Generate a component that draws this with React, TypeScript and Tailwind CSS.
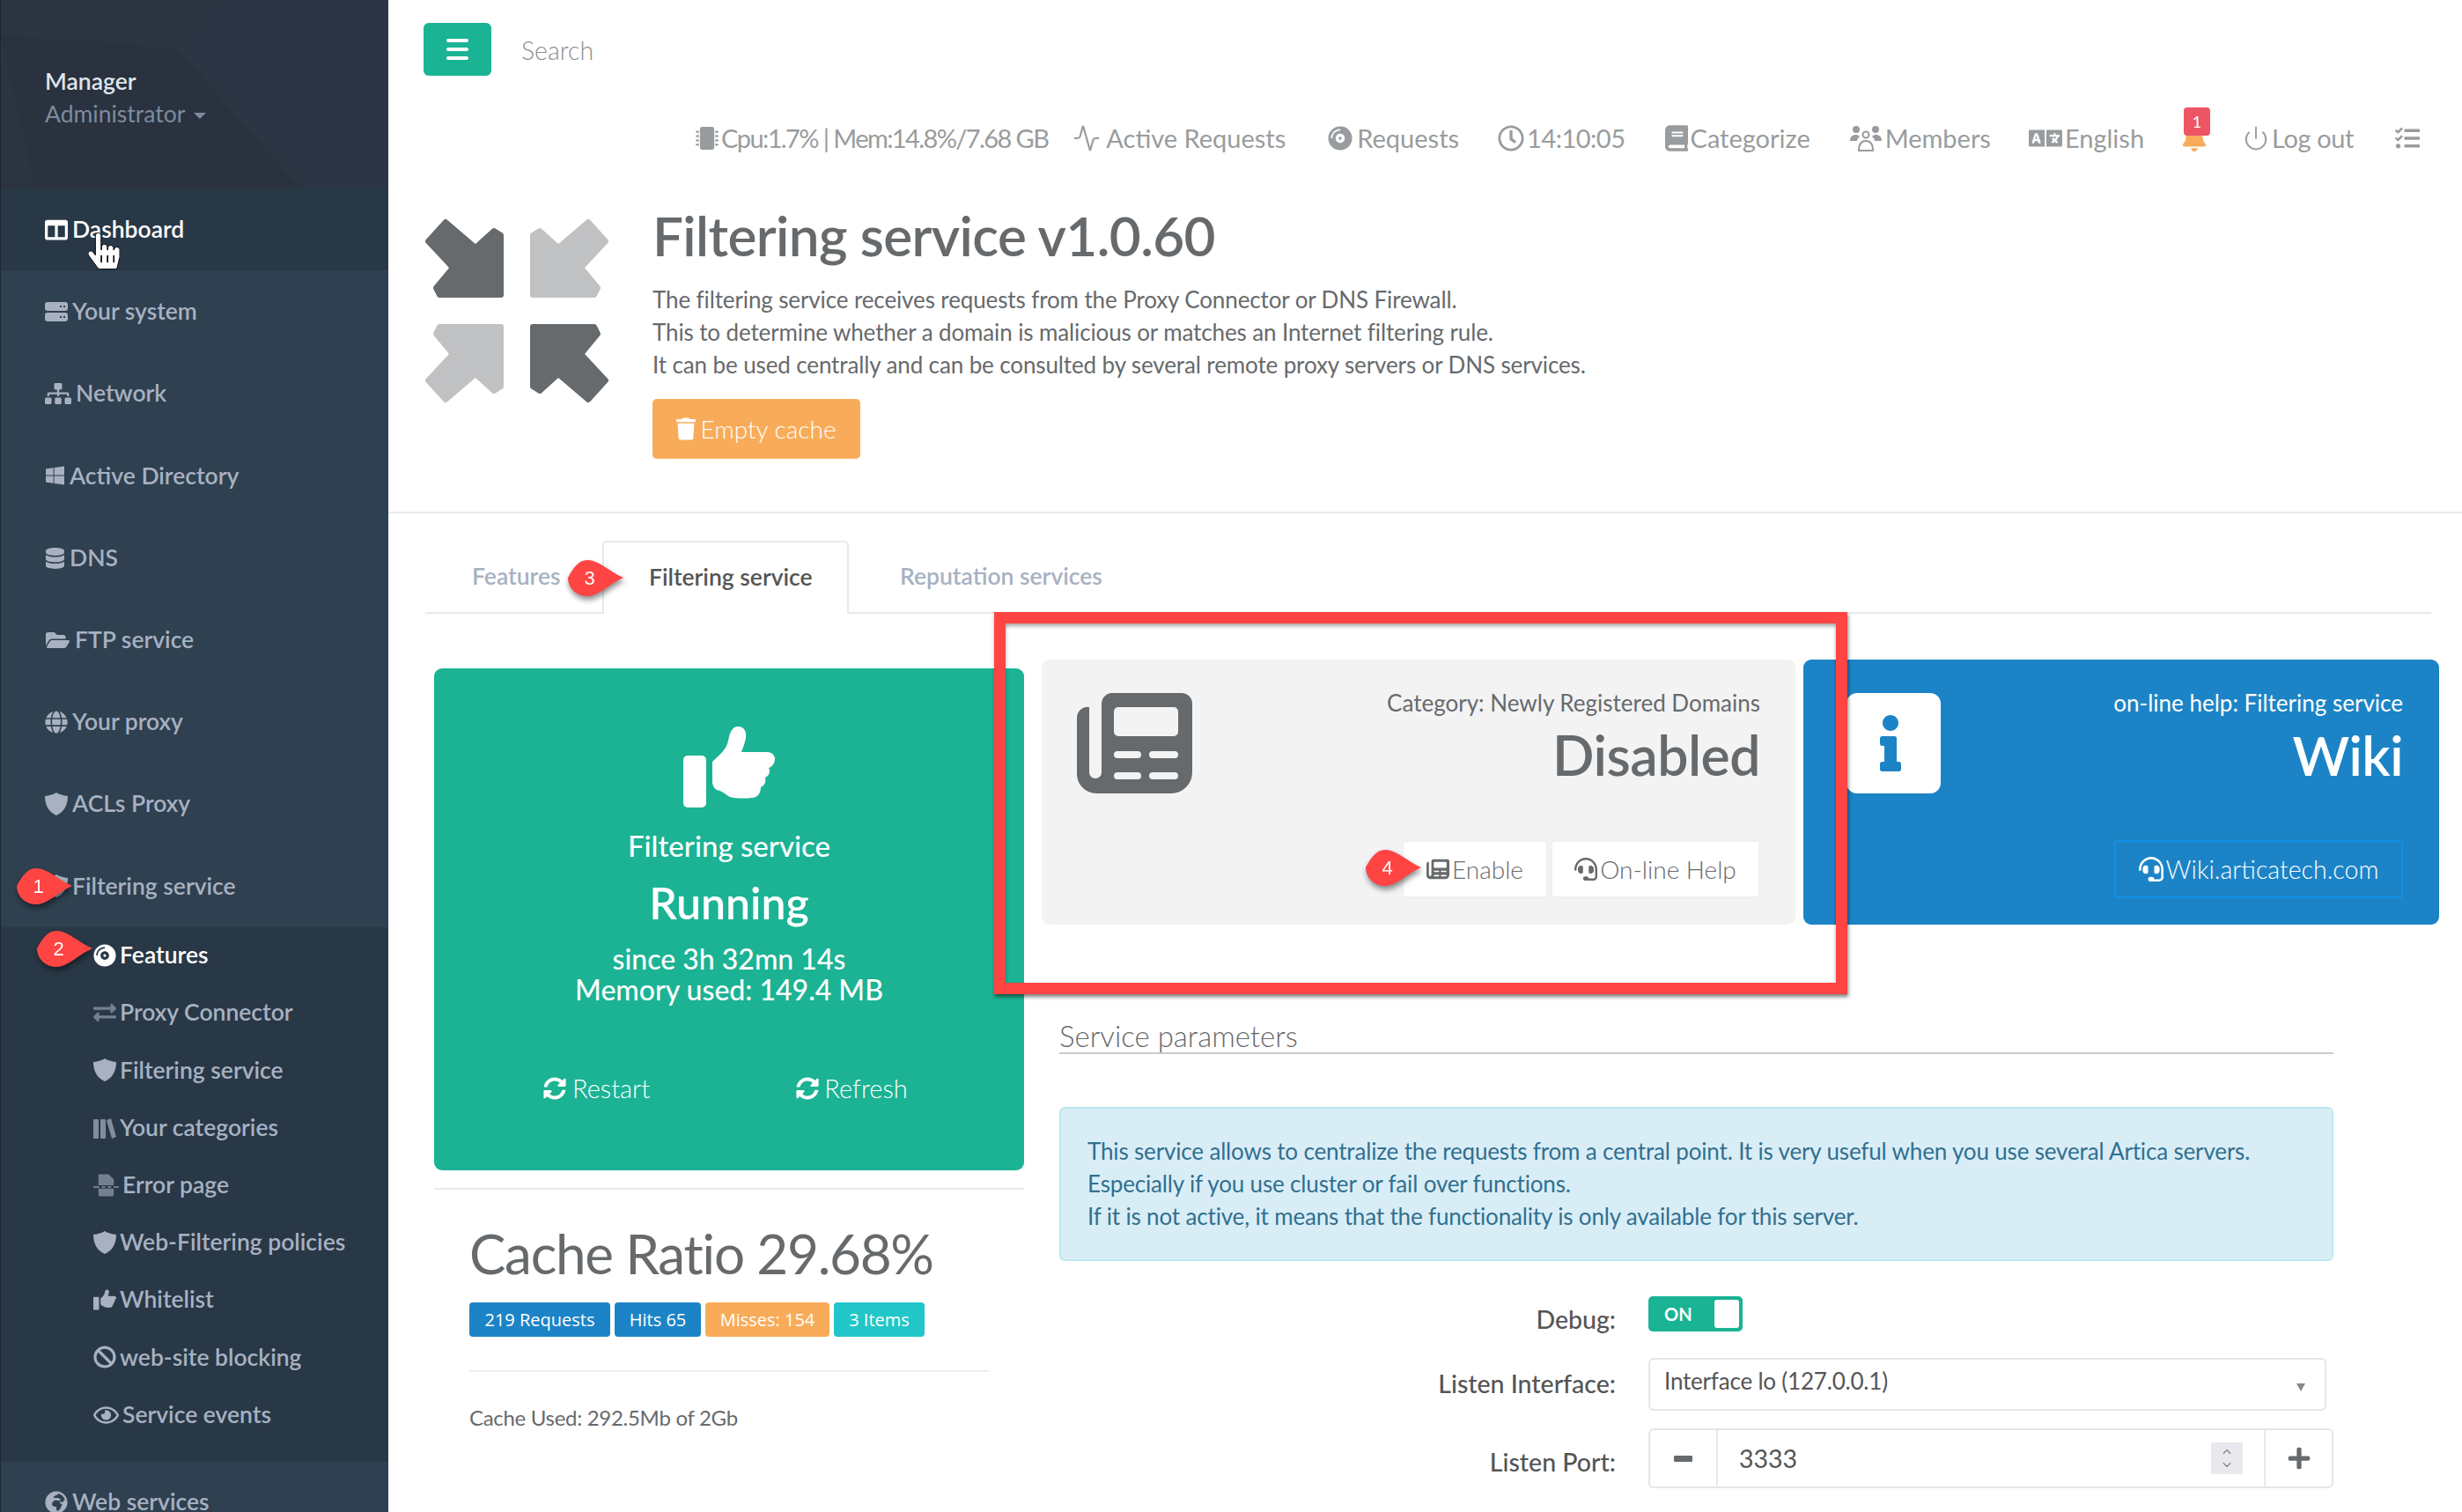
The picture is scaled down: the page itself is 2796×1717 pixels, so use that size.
import type { ReactNode } from 'react'
import {
  FaBan, FaBell, FaBook, FaColumns, FaCompactDisc, FaDatabase, FaExchangeAlt, FaFolderOpen, FaGlobe,
  FaGlobeAfrica, FaHandPointer, FaHeadset, FaInfo, FaLanguage, FaMicrochip, FaPlus,
  FaRegClock, FaRegEye, FaSitemap, FaSyncAlt, FaTasks, FaTrash, FaWindows,
} from 'react-icons/fa'
import { Activity, ChevronDown, ChevronUp, Power } from 'lucide-react'

type IconProps = { className?: string }

function BooksIcon({ className }: IconProps) {
  return (
    <svg viewBox="0 0 26 24" className={className} fill="currentColor">
      <rect x="0" y="2" width="6" height="22" rx="1" />
      <rect x="8" y="2" width="6" height="22" rx="1" />
      <path d="M15 3l5-2 6 21-5 2z" />
    </svg>
  )
}

function PageBreakIcon({ className }: IconProps) {
  return (
    <svg viewBox="0 0 30 26" className={className} fill="currentColor">
      <path d="M6 0h12l6 6v7H6zM6 17h18v7a2 2 0 0 1-2 2H8a2 2 0 0 1-2-2z" />
      <rect x="0" y="14" width="7" height="2" />
      <rect x="10" y="14" width="4" height="2" />
      <rect x="17" y="14" width="4" height="2" />
      <rect x="24" y="14" width="6" height="2" />
    </svg>
  )
}

function MembersIcon({ className }: IconProps) {
  return (
    <svg viewBox="0 0 36 30" className={className} fill="currentColor">
      <circle cx="7" cy="5" r="4" />
      <circle cx="29" cy="5" r="4" />
      <circle cx="18" cy="11" r="3.5" fill="none" stroke="currentColor" strokeWidth="2" />
      <path d="M0 18c0-5 3-7 7-7 2 0 3 1 4 2-2 2-3 3-3 5zM36 18c0-5-3-7-7-7-2 0-3 1-4 2 2 2 3 3 3 5z" />
      <path d="M10 29c0-7 3-11 8-11s8 4 8 11z" fill="none" stroke="currentColor" strokeWidth="2" />
    </svg>
  )
}

function ServerIcon({ className }: IconProps) {
  return (
    <svg viewBox="0 0 26 22" className={className} fill="currentColor" fillRule="evenodd">
      <path d="M3 0h20a3 3 0 0 1 3 3v4a3 3 0 0 1-3 3H3a3 3 0 0 1-3-3V3a3 3 0 0 1 3-3zM17 4v2h2V4zM21 4v2h2V4z" />
      <path d="M3 12h20a3 3 0 0 1 3 3v4a3 3 0 0 1-3 3H3a3 3 0 0 1-3-3v-4a3 3 0 0 1 3-3zM17 16v2h2v-2zM21 16v2h2v-2z" />
    </svg>
  )
}

function ShieldIcon({ className }: IconProps) {
  return (
    <svg viewBox="0 0 26 26" className={className} fill="currentColor">
      <path d="M13 0c3 2 8 3.500 13 4 0 10-4 18-13 22C4 22 0 14 0 4c5-.5 10-2 13-4z" />
    </svg>
  )
}

function ThumbIcon({ className }: IconProps) {
  return (
    <svg viewBox="0 0 104 92" className={className} fill="currentColor">
      <rect x="0" y="33" width="26" height="59" rx="5" />
      <path d="M33 40C40 33 49 27 51 16 53 6 56 0 62 0c8 0 10 7 9 13-1 6-4 13-5 16h29c6 0 9 4 9 8s-3 9-7 10c2 3 1 9-4 11 1 4 0 9-5 11 0 7-4 12-10 12-8 1-22 1-27-2-4-3-8-6-13-7-2-1-5-5-5-9z" />
    </svg>
  )
}

function NewspaperIcon({ className }: IconProps) {
  return (
    <svg viewBox="0 0 131 114" className={className} fill="currentColor" fillRule="evenodd">
      <path d="M38 0h81a12 12 0 0 1 12 12v78a24 24 0 0 1-24 24H22A22 22 0 0 1 0 92V28a12 12 0 0 1 14-12v74a7 7 0 0 0 14 0V12A12 12 0 0 1 38 0zM47 16a5 5 0 0 0-5 5v23a5 5 0 0 0 5 5h63a5 5 0 0 0 5-5V21a5 5 0 0 0-5-5zM46 66a4 4 0 0 0 0 8h23a4 4 0 0 0 0-8zM86 66a4 4 0 0 0 0 8h25a4 4 0 0 0 0-8zM46 90a4 4 0 0 0 0 8h23a4 4 0 0 0 0-8zM86 90a4 4 0 0 0 0 8h25a4 4 0 0 0 0-8z" />
    </svg>
  )
}

function CompressLogo() {
  const arrow = '25,5 59,34 80,15 88,20 88,88 18,88 14,80 33,57 5,27'
  return (
    <svg viewBox="0 0 212 212" className="w-[212px] h-[212px] shrink-0">
      <g strokeWidth="6" strokeLinejoin="round">
        <polygon points={arrow} fill="#676a6c" stroke="#676a6c" />
        <polygon points={arrow} fill="#c0c1c3" stroke="#c0c1c3" transform="translate(212 0) scale(-1 1)" />
        <polygon points={arrow} fill="#c0c1c3" stroke="#c0c1c3" transform="translate(0 212) scale(1 -1)" />
        <polygon points={arrow} fill="#676a6c" stroke="#676a6c" transform="translate(212 212) scale(-1 -1)" />
      </g>
    </svg>
  )
}

// Red callouts drawn on top of the screenshot
function Marker({ n, className }: { n: number; className: string }) {
  return (
    <div className={`absolute w-[63px] h-[41px] drop-shadow-[1px_4px_3px_rgba(0,0,0,0.45)] ${className}`}>
      <svg viewBox="0 0 63 41" className="w-full h-full">
        <path d="M22 0C35 0 47 13 63 20 47 27 35 41 22 41 9 41 0 31 0 20 6 9 12 0 22 0z" fill="#ff4444" />
      </svg>
      <span className="absolute left-0 top-0 w-[49px] h-full flex items-center justify-center text-white text-[22px] [font-family:'Liberation_Sans',sans-serif]">
        {n}
      </span>
    </div>
  )
}

const navTop = [
  { label: 'Your system', icon: <ServerIcon className="w-[26px] h-[22px]" /> },
  { label: 'Network', icon: <FaSitemap className="w-[30px] h-[24px]" /> },
  { label: 'Active Directory', icon: <FaWindows className="w-[23px] h-[24px]" /> },
  { label: 'DNS', icon: <FaDatabase className="w-[23px] h-[24px]" /> },
  { label: 'FTP service', icon: <FaFolderOpen className="w-[29px] h-[24px]" /> },
  { label: 'Your proxy', icon: <FaGlobe className="w-[26px] h-[26px]" /> },
  { label: 'ACLs Proxy', icon: <ShieldIcon className="w-[26px] h-[26px]" /> },
  { label: 'Filtering service', icon: <ShieldIcon className="w-[26px] h-[26px]" /> },
]

const navSub: { label: string; icon: ReactNode; active?: boolean }[] = [
  { label: 'Features', icon: <FaCompactDisc className="w-[26px] h-[26px]" />, active: true },
  { label: 'Proxy Connector', icon: <FaExchangeAlt className="w-[26px] h-[26px] opacity-60" /> },
  { label: 'Filtering service', icon: <ShieldIcon className="w-[26px] h-[26px]" /> },
  { label: 'Your categories', icon: <BooksIcon className="w-[26px] h-[24px] opacity-70" /> },
  { label: 'Error page', icon: <PageBreakIcon className="w-[29px] h-[26px] opacity-60" /> },
  { label: 'Web-Filtering policies', icon: <ShieldIcon className="w-[26px] h-[26px]" /> },
  { label: 'Whitelist', icon: <ThumbIcon className="w-[26px] h-[24px]" /> },
  { label: 'web-site blocking', icon: <FaBan className="w-[26px] h-[26px]" /> },
  { label: 'Service events', icon: <FaRegEye className="w-[29px] h-[26px]" /> },
]

function Sidebar() {
  return (
    <aside className="w-[441px] shrink-0 h-full border-l border-[#1d2530] bg-[#2f4050] text-[26.5px] font-semibold text-[#a7b1c2] overflow-hidden">
      <div className="relative h-[214px] bg-[#2b3441] pl-[50px] pt-[74px] overflow-hidden">
        <svg viewBox="0 0 441 214" className="absolute inset-0 w-full h-full">
          <polygon points="200,55 240,0 441,0 441,214 340,214" fill="#2c3543" />
          <polygon points="0,40 200,55 340,214 40,214" fill="#29323e" />
        </svg>
        <div className="relative leading-[36px] text-[#dfe4ed]">Manager</div>
        <div className="relative leading-[38px] font-normal text-[#7d8b9e] flex items-center gap-[10px]">
          Administrator
          <span className="mt-[4px] border-x-[7px] border-t-[7px] border-x-transparent border-t-[#7d8b9e]" />
        </div>
      </div>
      <div className="h-[93px] bg-[#293846] text-white flex items-center gap-[5px] pl-[50px]">
        <FaColumns className="w-[26px] h-[26px]" />
        Dashboard
      </div>
      {navTop.map((item) => (
        <div key={item.label} className="h-[93.2px] pt-[1px] flex items-center gap-[5px] pl-[50px]">
          {item.icon}
          {item.label}
        </div>
      ))}
      <div className="h-[607px] bg-[#293846] pb-[19px]">
        {navSub.map((item) => (
          <div
            key={item.label}
            className={`h-[65.2px] flex items-center gap-[4px] pl-[105px] ${item.active ? 'text-white' : ''}`}
          >
            {item.icon}
            {item.label}
          </div>
        ))}
      </div>
      <div className="h-[93px] flex items-center gap-[5px] pl-[50px]">
        <FaGlobeAfrica className="w-[26px] h-[26px]" />
        Web services
      </div>
    </aside>
  )
}

const toolbar: { label: string; icon: ReactNode; cls: string }[] = [
  { label: 'Cpu:1.7% | Mem:14.8%/7.68 GB', icon: <FaMicrochip className="w-[26px] h-[26px]" />, cls: 'tracking-[-1.6px]' },
  { label: 'Active Requests', icon: <Activity className="w-[38px] h-[32px]" strokeWidth={1.6} />, cls: 'ml-[25px]' },
  { label: 'Requests', icon: <FaCompactDisc className="w-[32px] h-[28px]" />, cls: 'ml-[46px]' },
  { label: '14:10:05', icon: <FaRegClock className="w-[30px] h-[30px]" />, cls: 'ml-[44px] tracking-[-0.5px]' },
  { label: 'Categorize', icon: <FaBook className="w-[26px] h-[30px]" />, cls: 'ml-[45px]' },
  { label: 'Members', icon: <MembersIcon className="w-[38px] h-[30px]" />, cls: 'ml-[44px]' },
  { label: 'English', icon: <FaLanguage className="w-[38px] h-[32px]" />, cls: 'ml-[43px]' },
]

function TopBar() {
  return (
    <>
      <div className="flex items-center pt-[26px] pl-[40px]">
        <button className="w-[77px] h-[60px] rounded-[6px] bg-[#1ab394] text-white flex items-center justify-center">
          <span className="flex flex-col gap-[6px]">
            <span className="block w-[25px] h-[4px] rounded bg-white" />
            <span className="block w-[25px] h-[4px] rounded bg-white" />
            <span className="block w-[25px] h-[4px] rounded bg-white" />
          </span>
        </button>
        <span className="ml-[34px] mt-[2px] text-[28.5px] font-light text-[#8c8f91]">Search</span>
      </div>
      <div className="mt-[51px] h-[40px] flex items-center justify-end pr-[46px] text-[29px] text-[#999c9e]">
        {toolbar.map((item) => (
          <span key={item.label} className={`flex items-center gap-[3px] ${item.cls}`}>
            {item.icon}
            {item.label}
          </span>
        ))}
        <span className="relative ml-[39px] w-[36px] h-[40px] flex items-center justify-center text-[#f8ac59]">
          <FaBell className="w-[32px] h-[30px]" />
          <span className="absolute left-[6px] -top-[15px] w-[30px] h-[32px] rounded-[4px] bg-[#ed5565] text-white text-[18px] flex items-center justify-center">
            1
          </span>
        </span>
        <span className="ml-[37px] flex items-center gap-[3px] tracking-[-0.4px]">
          <Power className="w-[30px] h-[30px]" strokeWidth={1.5} />
          Log out
        </span>
        <FaTasks className="ml-[45px] w-[32px] h-[28px]" />
      </div>
    </>
  )
}

function PageHeader() {
  return (
    <div className="mt-[63px] h-[343px] border-b-2 border-[#e7eaec] flex pl-[40px] text-[#676a6c]">
      <div className="mt-[7px]">
        <CompressLogo />
      </div>
      <div className="ml-[48px]">
        <h1 className="-mt-[3px] text-[62px] leading-[60px] font-semibold tracking-[-0.6px]">Filtering service v1.0.60</h1>
        <p className="mt-[25px] text-[26px] leading-[37px] tracking-[-0.12px]">
          The filtering service receives requests from the Proxy Connector or DNS Firewall.
          <br />
          This to determine whether a domain is malicious or matches an Internet filtering rule.
          <br />
          It can be used centrally and can be consulted by several remote proxy servers or DNS services.
        </p>
        <button className="mt-[20px] w-[236px] h-[68px] rounded-[5px] bg-[#f8ac59] text-white text-[28px] font-light flex items-center justify-center gap-[5px]">
          <FaTrash className="w-[22px] h-[26px]" />
          Empty cache
        </button>
      </div>
    </div>
  )
}

function Tabs() {
  return (
    <div className="mt-[31px] ml-[42px] mr-[35px] h-[83px] border-b-2 border-[#e7eaec] flex text-[26.5px] font-semibold text-[#a7b1c2]">
      <div className="pl-[53px] w-[201px] leading-[80px]">Features</div>
      <div className="w-[280px] h-[83px] pl-[51px] leading-[78px] text-[#555] bg-white border-2 border-b-0 border-[#e7eaec] rounded-t-[5px]">
        Filtering service
      </div>
      <div className="pl-[58px] leading-[80px]">Reputation services</div>
    </div>
  )
}

function StatusColumn() {
  return (
    <div className="w-[670px] shrink-0 mt-[10px] text-[#676a6c]">
      <div className="h-[570px] rounded-[9px] bg-[#1bb394] text-white flex flex-col items-center pt-[66px]">
        <ThumbIcon className="w-[104px] h-[92px]" />
        <div className="mt-[23px] text-[33px] leading-[40px] font-medium">Filtering service</div>
        <div className="mt-[13px] text-[50px] leading-[64px] font-semibold">Running</div>
        <div className="mt-[14px] text-[32px] leading-[35px] font-medium text-center">
          since 3h 32mn 14s
          <br />
          Memory used: 149.4 MB
        </div>
        <div className="mt-[77px] w-full flex text-[29px] font-light leading-[36px]">
          <span className="ml-[124px] flex items-center gap-[7px]">
            <FaSyncAlt className="w-[26px] h-[26px]" />
            Restart
          </span>
          <span className="ml-[166px] flex items-center gap-[6px]">
            <FaSyncAlt className="w-[26px] h-[26px]" />
            Refresh
          </span>
        </div>
      </div>
      <div className="mt-[20px] border-t-2 border-[#e7eaec] pl-[40px] pt-[36px]">
        <div className="text-[62px] leading-[72px] tracking-[-1.3px]">Cache Ratio 29.68%</div>
        <div className="mt-[20px] flex gap-[5px] text-[20px] text-white [font-family:'Open_Sans',sans-serif]">
          <span className="w-[160px] h-[39px] rounded-[4px] bg-[#1c84c6] flex items-center justify-center">219 Requests</span>
          <span className="w-[98px] h-[39px] rounded-[4px] bg-[#1c84c6] flex items-center justify-center">Hits 65</span>
          <span className="w-[141px] h-[39px] rounded-[4px] bg-[#f8ac59] flex items-center justify-center">Misses: 154</span>
          <span className="w-[103px] h-[39px] rounded-[4px] bg-[#23c6c8] flex items-center justify-center">3 Items</span>
        </div>
        <div className="mt-[38px] mr-[40px] border-t-2 border-[#eeeeee] pt-[36px] text-[24px] leading-[32px] tracking-[-0.3px]">
          Cache Used: 292.5Mb of 2Gb
        </div>
      </div>
    </div>
  )
}

function Widgets() {
  return (
    <div className="flex gap-[9px]">
      <div className="w-[856px] h-[301px] rounded-[9px] bg-[#f3f3f4] text-[#676a6c] flex justify-between pl-[40px] pr-[40px] pt-[38px]">
        <NewspaperIcon className="w-[131px] h-[114px] shrink-0" />
        <div className="flex flex-col items-end">
          <div className="text-[26px] leading-[28px] -mt-[3px]">Category: Newly Registered Domains</div>
          <div className="mt-[15px] text-[62.5px] leading-[60px] font-semibold tracking-[-0.5px]">Disabled</div>
          <div className="mt-[67px] flex gap-[3px] text-[28px] font-light">
            <span className="w-[166px] h-[66px] rounded-[4px] bg-white border-2 border-[#eef0f2] flex items-center justify-center gap-[3px]">
              <NewspaperIcon className="w-[26px] h-[24px]" />
              Enable
            </span>
            <span className="w-[238px] h-[66px] rounded-[4px] bg-white border-2 border-[#eef0f2] flex items-center justify-center gap-[3px]">
              <FaHeadset className="w-[26px] h-[26px]" />
              On-line Help
            </span>
          </div>
        </div>
      </div>
      <div className="w-[722px] h-[301px] rounded-[9px] bg-[#1c84c6] text-white flex justify-between pl-[49px] pr-[41px] pt-[38px]">
        <div className="w-[107px] h-[114px] rounded-[12px] bg-white text-[#1c84c6] flex items-center justify-center pr-[8px]">
          <FaInfo className="w-[36px] h-[64px]" />
        </div>
        <div className="flex flex-col items-end">
          <div className="text-[26px] leading-[28px] -mt-[3px]">on-line help: Filtering service</div>
          <div className="mt-[15px] text-[62px] leading-[60px] font-semibold tracking-[-0.5px]">Wiki</div>
          <div className="mt-[67px] w-[328px] h-[66px] rounded-[4px] border-2 border-[#1090e8] text-[28.5px] font-light flex items-center justify-center gap-[3px]">
            <FaHeadset className="w-[28px] h-[28px]" />
            Wiki.articatech.com
          </div>
        </div>
      </div>
    </div>
  )
}

function ServiceParameters() {
  return (
    <div className="pl-[20px] w-[1467px] text-[#676a6c]">
      <div className="mt-[108px] border-b-2 border-[#cccccc] text-[33px] leading-[36px] pb-[1px] font-light">Service parameters</div>
      <div className="mt-[60px] h-[175px] rounded-[6px] bg-[#d9edf7] border-2 border-[#bce8f1] pl-[30px] pt-[30px] text-[26px] leading-[37px] tracking-[-0.16px] text-[#31708f]">
        This service allows to centralize the requests from a central point. It is very useful when you use several Artica servers.
        <br />
        Especially if you use cluster or fail over functions.
        <br />
        If it is not active, it means that the functionality is only available for this server.
      </div>
      <div className="mt-[40px] text-[28.5px]">
        <div className="flex items-start h-[70px]">
          <label className="w-[632px] pt-[8px] text-right font-medium text-[#555] leading-[36px]">Debug:</label>
          <span className="ml-[37px] w-[107px] h-[40px] rounded-[5px] bg-[#1ab394] flex items-center justify-between pl-[18px] pr-[4px] text-white text-[20px] font-bold">
            ON
            <span className="w-[28px] h-[32px] rounded-[3px] bg-white" />
          </span>
        </div>
        <div className="flex items-start h-[80px]">
          <label className="w-[632px] pt-[11px] text-right font-medium text-[#555] leading-[36px]">Listen Interface:</label>
          <div className="relative ml-[37px] w-[770px] h-[60px] rounded-[6px] border-2 border-[#e5e6e7] pl-[16px] pt-[6px] text-[26px] leading-[36px] tracking-[-0.2px] text-[#555]">
            Interface lo (127.0.0.1)
            <span className="absolute right-[22px] top-[27px] border-x-[5px] border-t-[9px] border-x-transparent border-t-[#888]" />
          </div>
        </div>
        <div className="flex items-start">
          <label className="w-[632px] pt-[20px] text-right font-medium text-[#555] leading-[36px]">Listen Port:</label>
          <div className="ml-[37px] w-[778px] h-[68px] rounded-[6px] border-2 border-[#e5e6e7] flex items-center text-[#555]">
            <div className="w-[77px] h-full border-r-2 border-[#e7eaec] flex items-center justify-center">
              <span className="block w-[21px] h-[7px] rounded-[1px] bg-[#676a6c]" />
            </div>
            <div className="flex-1 h-full flex items-center justify-between pl-[24px] pr-[24px]">
              3333
              <span className="w-[36px] h-[36px] bg-[#e8e8ee] text-[#777] flex flex-col items-center justify-center">
                <ChevronUp className="w-[18px] h-[15px]" />
                <ChevronDown className="w-[18px] h-[15px]" />
              </span>
            </div>
            <div className="w-[77px] h-full border-l-2 border-[#e7eaec] flex items-center justify-center text-[#676a6c]">
              <FaPlus className="w-[28px] h-[28px]" />
            </div>
          </div>
        </div>
      </div>
    </div>
  )
}

export default function App() {
  return (
    <div className="relative w-[2796px] h-[1717px] overflow-hidden flex bg-white [font-family:Lato,sans-serif]">
      <Sidebar />
      <main className="flex-1 min-w-0">
        <TopBar />
        <PageHeader />
        <Tabs />
        <div className="mt-[52px] pl-[52px] flex gap-[20px]">
          <StatusColumn />
          <div className="min-w-0">
            <Widgets />
            <ServiceParameters />
          </div>
        </div>
      </main>

      {/* annotations */}
      <div className="absolute left-[1129px] top-[695px] w-[969px] h-[434px] border-[13px] border-[#ff4444] shadow-[1px_3px_4px_rgba(0,0,0,0.5),inset_0_3px_4px_rgba(0,0,0,0.35)]" />
      <Marker n={1} className="left-[19px] top-[986px]" />
      <Marker n={2} className="left-[42px] top-[1057px]" />
      <Marker n={3} className="left-[645px] top-[636px]" />
      <Marker n={4} className="left-[1551px] top-[965px]" />
      <FaHandPointer className="absolute left-[100px] top-[262px] w-[36px] h-[46px] text-white stroke-black stroke-[12]" />
    </div>
  )
}
